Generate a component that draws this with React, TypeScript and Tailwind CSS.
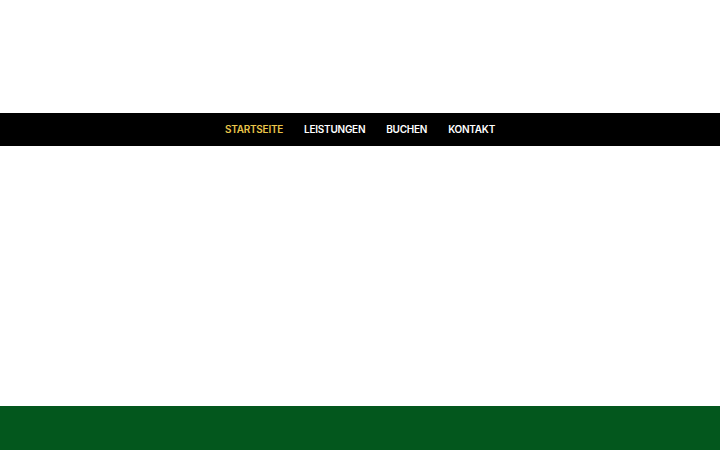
const NAV = ['Startseite', 'Leistungen', 'Buchen', 'Kontakt'];

export default function App() {
  return (
    <div className="min-h-[450px] flex flex-col bg-white" style={{ fontFamily: 'Inter, "Open Sans", sans-serif' }}>
      <header className="h-[113px]" />
      <nav className="h-[33px] bg-black flex items-center justify-center gap-[21px]">
        {NAV.map((item, i) => (
          <a
            key={item}
            href="#"
            className={`text-[10px] font-semibold uppercase tracking-[-0.25px] ${i === 0 ? 'text-[#e9c54a]' : 'text-white'}`}
          >
            {item}
          </a>
        ))}
      </nav>
      <main className="h-[260px]" />
      <footer className="h-[44px] bg-[#03571d]" />
    </div>
  );
}
